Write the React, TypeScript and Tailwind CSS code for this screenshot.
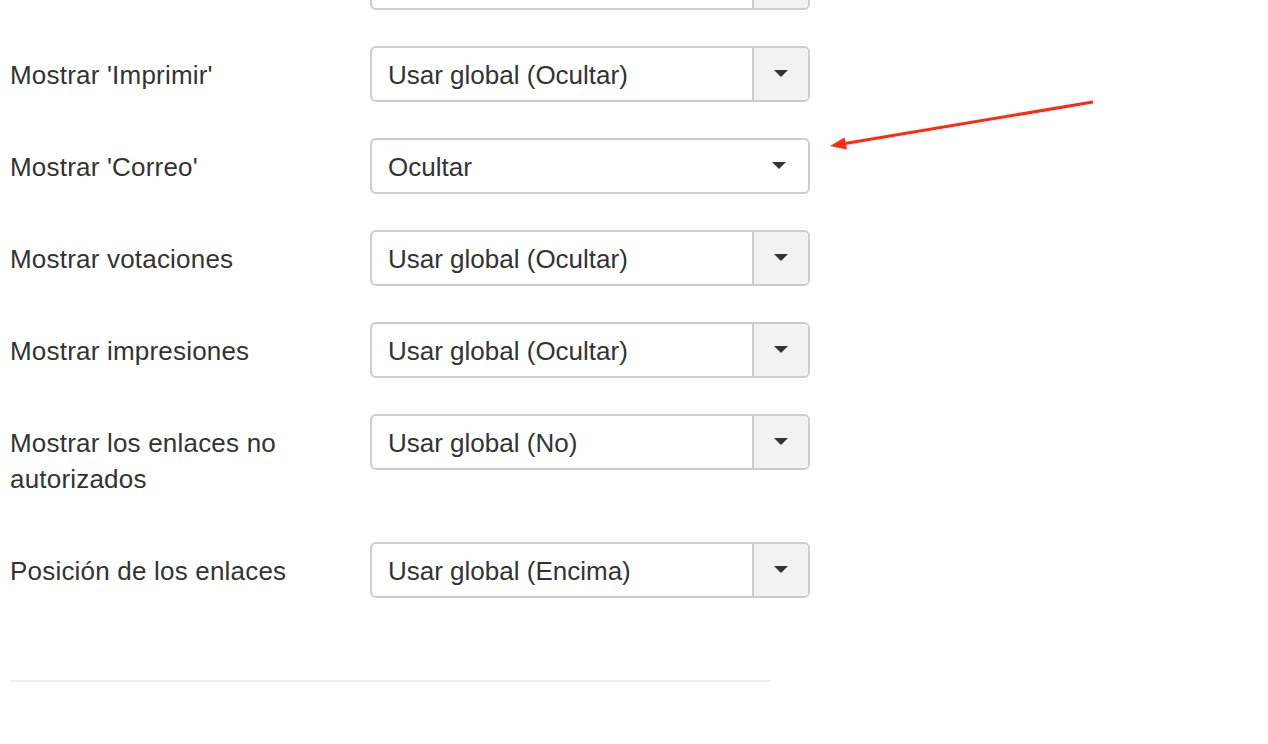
import React from "react"

type Row = {
  label: string
  value: string
  plain?: boolean
}

const rows: Row[] = [
  { label: "", value: "" },
  { label: "Mostrar 'Imprimir'", value: "Usar global (Ocultar)" },
  { label: "Mostrar 'Correo'", value: "Ocultar", plain: true },
  { label: "Mostrar votaciones", value: "Usar global (Ocultar)" },
  { label: "Mostrar impresiones", value: "Usar global (Ocultar)" },
  { label: "Mostrar los enlaces no autorizados", value: "Usar global (No)" },
  { label: "Posición de los enlaces", value: "Usar global (Encima)" },
]

function Caret() {
  return (
    <svg width="14" height="8" viewBox="0 0 14 8" className="block">
      <polygon points="0,0 14,0 7,7" fill="#333" />
    </svg>
  )
}

function Select({ value, plain }: { value: string; plain?: boolean }) {
  return (
    <div className="flex h-[56px] w-[440px] overflow-hidden rounded-[6px] border-2 border-[#cccccc] bg-white">
      <div className="flex flex-1 items-center pl-[16px] pt-[2px]">{value}</div>
      {plain ? (
        <div className="flex w-[56px] items-center justify-center pr-[2px]">
          <Caret />
        </div>
      ) : (
        <div className="flex w-[56px] items-center justify-center border-l-2 border-[#cccccc] bg-[#f2f2f2]">
          <Caret />
        </div>
      )}
    </div>
  )
}

export default function App() {
  return (
    <div className="relative h-[744px] overflow-hidden bg-white pl-[10px] font-['Liberation_Sans',Arial,sans-serif] text-[26px] leading-[36px] text-[#333333]">
      <div className="-mt-[46px]">
        {rows.map((row, i) => (
          <div key={i} className="mb-[36px] flex">
            <div className="w-[360px] pb-[9px] pr-[60px] pt-[11px] tracking-[0.2px]">{row.label}</div>
            <Select value={row.value} plain={row.plain} />
          </div>
        ))}
      </div>

      <div className="mt-[82px] h-[2px] w-[760px] bg-[#eeeeee]" />

      <svg
        className="absolute left-[826px] top-[95px]"
        width="280"
        height="60"
        viewBox="0 0 280 60"
      >
        <line x1="267" y1="7" x2="19" y2="48.5" stroke="#ff2a10" strokeWidth="3" />
        <polygon points="4,51 21,54.5 18.5,42.5" fill="#ff2a10" />
      </svg>
    </div>
  )
}
